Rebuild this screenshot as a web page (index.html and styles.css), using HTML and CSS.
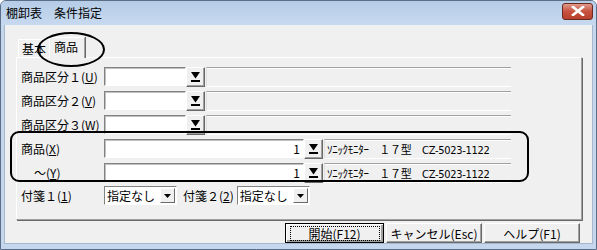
FILE: index.html
```html
<!DOCTYPE html>
<html lang="ja">
<head>
    <meta charset="UTF-8">
    <title>棚卸表　条件指定</title>
    <link rel="stylesheet" href="styles.css">
</head>
<body>
    <div class="window">
        <div class="titlebar">
            <span class="title">棚卸表　条件指定</span>
            <button class="close-btn" aria-label="閉じる">
                <svg width="14" height="10" viewBox="0 0 14 10">
                    <path d="M2 1 L12 9 M12 1 L2 9" stroke="#fff" stroke-width="2.6" stroke-linecap="square"/>
                </svg>
            </button>
        </div>
        <div class="client">
            <div class="tabs">
                <div class="tab">基本</div>
                <div class="tab active">商品</div>
            </div>
            <div class="panel">
                <div class="row">
                    <label class="lbl">商品区分１(<u>U</u>)</label>
                    <div class="input short"></div>
                    <div class="pick"><svg width="11" height="12" viewBox="0 0 11 12"><path d="M1 1 H10 L5.5 7.5 Z" fill="#000"/><rect x="1" y="9" width="9" height="2" fill="#000"/></svg></div>
                    <div class="field wide"></div>
                </div>
                <div class="row">
                    <label class="lbl">商品区分２(<u>V</u>)</label>
                    <div class="input short"></div>
                    <div class="pick"><svg width="11" height="12" viewBox="0 0 11 12"><path d="M1 1 H10 L5.5 7.5 Z" fill="#000"/><rect x="1" y="9" width="9" height="2" fill="#000"/></svg></div>
                    <div class="field wide"></div>
                </div>
                <div class="row">
                    <label class="lbl">商品区分３(<u>W</u>)</label>
                    <div class="input short"></div>
                    <div class="pick"><svg width="11" height="12" viewBox="0 0 11 12"><path d="M1 1 H10 L5.5 7.5 Z" fill="#000"/><rect x="1" y="9" width="9" height="2" fill="#000"/></svg></div>
                    <div class="field wide"></div>
                </div>
                <div class="row">
                    <label class="lbl">商品(<u>X</u>)</label>
                    <div class="input long">1</div>
                    <div class="pick"><svg width="11" height="12" viewBox="0 0 11 12"><path d="M1 1 H10 L5.5 7.5 Z" fill="#000"/><rect x="1" y="9" width="9" height="2" fill="#000"/></svg></div>
                    <div class="field narrow"><span class="name">ｿﾆｯｸﾓﾆﾀｰ　１７型　CZ-5023-1122</span></div>
                </div>
                <div class="row">
                    <label class="lbl indent">～(<u>Y</u>)</label>
                    <div class="input long">1</div>
                    <div class="pick"><svg width="11" height="12" viewBox="0 0 11 12"><path d="M1 1 H10 L5.5 7.5 Z" fill="#000"/><rect x="1" y="9" width="9" height="2" fill="#000"/></svg></div>
                    <div class="field narrow"><span class="name">ｿﾆｯｸﾓﾆﾀｰ　１７型　CZ-5023-1122</span></div>
                </div>
                <div class="row tags">
                    <label class="lbl">付箋１(<u>1</u>)</label>
                    <div class="select">指定なし<span class="arrow"><svg width="7" height="4" viewBox="0 0 7 4"><path d="M0 0 H7 L3.5 4 Z" fill="#000"/></svg></span></div>
                    <label class="lbl2">付箋２(<u>2</u>)</label>
                    <div class="select">指定なし<span class="arrow"><svg width="7" height="4" viewBox="0 0 7 4"><path d="M0 0 H7 L3.5 4 Z" fill="#000"/></svg></span></div>
                </div>
            </div>
            <div class="buttons">
                <button class="btn default"><span class="focus">開始(F12)</span></button>
                <button class="btn">キャンセル(Esc)</button>
                <button class="btn">ヘルプ(F1)</button>
            </div>

            <!-- annotations drawn over the dialog -->
            <div class="mark-ellipse"></div>
            <div class="mark-box"></div>
        </div>
    </div>
</body>
</html>
```

FILE: styles.css
```css
body {
    margin: 0;
    font-family: "Noto Sans CJK JP", "DejaVu Sans", sans-serif;
    font-size: 12px;
    color: #000;
}
.window {
    width: 597px;
    height: 250px;
    box-sizing: border-box;
    background: #c4d7ed;
    border: 1px solid #5a6f87;
    border-radius: 6px 6px 0 0;
    display: flex;
    flex-direction: column;
}
.titlebar {
    height: 24px;
    display: flex;
    align-items: center;
    justify-content: space-between;
    padding: 0 3px 0 5px;
    background: linear-gradient(#b6cde7, #c6d9ef);
    border-radius: 5px 5px 0 0;
}
.title {
    font-size: 12px;
    line-height: 1;
}
.close-btn {
    width: 31px;
    height: 17px;
    margin-top: -4px;
    padding: 0;
    border: 1px solid #6b2a20;
    border-radius: 3px;
    background: linear-gradient(#e09a8c, #c75240 50%, #b8402c);
    display: flex;
    align-items: center;
    justify-content: center;
}
.client {
    position: relative;
    flex: 1;
    margin: 0 3px 5px 3px;
    background: #f0f0f0;
    padding: 12px 0 0 11px;
    border: 1px solid #a6b8cc;
    border-top: none;
}
.tabs {
    display: flex;
    align-items: flex-end;
    height: 20px;
    padding-left: 2px;
}
.tab {
    height: 17px;
    padding: 0 3px;
    line-height: 17px;
    border-top: 1px solid #fff;
    border-left: 1px solid #fff;
}
.tab.active {
    position: relative;
    height: 20px;
    line-height: 18px;
    padding: 0 6px 0 4px;
    background: #f0f0f0;
    border-right: 1px solid #a0a0a0;
    box-shadow: 1px 0 0 #696969;
    margin-bottom: -1px;
    z-index: 1;
}
.panel {
    width: 560px;
    height: 153px;
    border-top: 1px solid #fff;
    border-left: 1px solid #fff;
    border-right: 1px solid #a0a0a0;
    border-bottom: 1px solid #a0a0a0;
    box-shadow: 1px 1px 0 #696969;
    padding: 8px 0 0 4px;
}
.row {
    display: flex;
    align-items: center;
    height: 21px;
    margin-bottom: 3px;
}
.lbl {
    width: 83px;
    white-space: nowrap;
}
.lbl.indent {
    padding-left: 13px;
    width: 70px;
}
.lbl2 {
    margin: 0 3px 0 6px;
    white-space: nowrap;
}
.input {
    height: 19px;
    box-sizing: border-box;
    background: #fff;
    border-top: 1px solid #828282;
    border-left: 1px solid #828282;
    border-right: 1px solid #fff;
    border-bottom: 1px solid #fff;
    box-shadow: inset 1px 1px 0 #c0c0c0;
    text-align: right;
    padding-right: 3px;
    line-height: 17px;
}
.input.short { width: 82px; }
.input.long { width: 200px; }
.pick {
    width: 19px;
    height: 20px;
    box-sizing: border-box;
    border-top: 1px solid #fff;
    border-left: 1px solid #fff;
    border-right: 1px solid #696969;
    border-bottom: 1px solid #696969;
    box-shadow: inset -1px -1px 0 #a0a0a0;
    background: #f0f0f0;
    display: flex;
    align-items: center;
    justify-content: center;
    margin-right: 1px;
}
.field {
    height: 20px;
    box-sizing: border-box;
    border-top: 1px solid #a0a0a0;
    border-bottom: 1px solid #fff;
    border-left: 1px solid #e0e0e0;
    box-shadow: inset 0 1px 0 #fff;
    display: flex;
    align-items: center;
}
.field.wide { width: 305px; }
.field.narrow { width: 187px; }
.name {
    font-family: "DejaVu Sans Condensed", "Noto Sans CJK JP", sans-serif;
    font-size: 11px;
    padding-left: 2px;
    white-space: nowrap;
    letter-spacing: -0.3px;
}
.row.tags {
    margin-top: 2px;
    height: 19px;
}
.select {
    width: 73px;
    height: 19px;
    box-sizing: border-box;
    background: #fff;
    border-top: 1px solid #828282;
    border-left: 1px solid #828282;
    border-right: 1px solid #fff;
    border-bottom: 1px solid #fff;
    display: flex;
    align-items: center;
    justify-content: space-between;
    padding-left: 2px;
}
.select .arrow {
    width: 15px;
    height: 15px;
    box-sizing: border-box;
    border-top: 1px solid #fff;
    border-left: 1px solid #fff;
    border-right: 1px solid #696969;
    border-bottom: 1px solid #696969;
    background: #f0f0f0;
    display: flex;
    align-items: center;
    justify-content: center;
    margin-right: 1px;
}
.buttons {
    display: flex;
    justify-content: flex-end;
    gap: 2px;
    margin-top: 3px;
    width: 564px;
}
.btn {
    height: 20px;
    width: 96px;
    padding: 0;
    font-family: "Noto Sans CJK JP", sans-serif;
    font-size: 12px;
    background: #f0f0f0;
    border-top: 1px solid #fff;
    border-left: 1px solid #fff;
    border-right: 1px solid #696969;
    border-bottom: 1px solid #696969;
    box-shadow: inset -1px -1px 0 #a0a0a0;
}
.btn.default {
    width: 99px;
    border: 1px solid #000;
    box-shadow: inset 1px 1px 0 #fff, inset -2px -2px 0 #a0a0a0;
}
.btn .focus {
    display: inline-block;
    width: 88px;
    line-height: 13px;
    border: 1px dotted #000;
}
.mark-ellipse {
    position: absolute;
    left: 32px;
    top: 7px;
    width: 64px;
    height: 31px;
    border: 2px solid #000;
    border-radius: 50%;
    z-index: 2;
}
.mark-box {
    position: absolute;
    left: 5px;
    top: 106px;
    width: 515px;
    height: 47px;
    border: 2px solid #000;
    border-radius: 9px;
    z-index: 2;
}
```
